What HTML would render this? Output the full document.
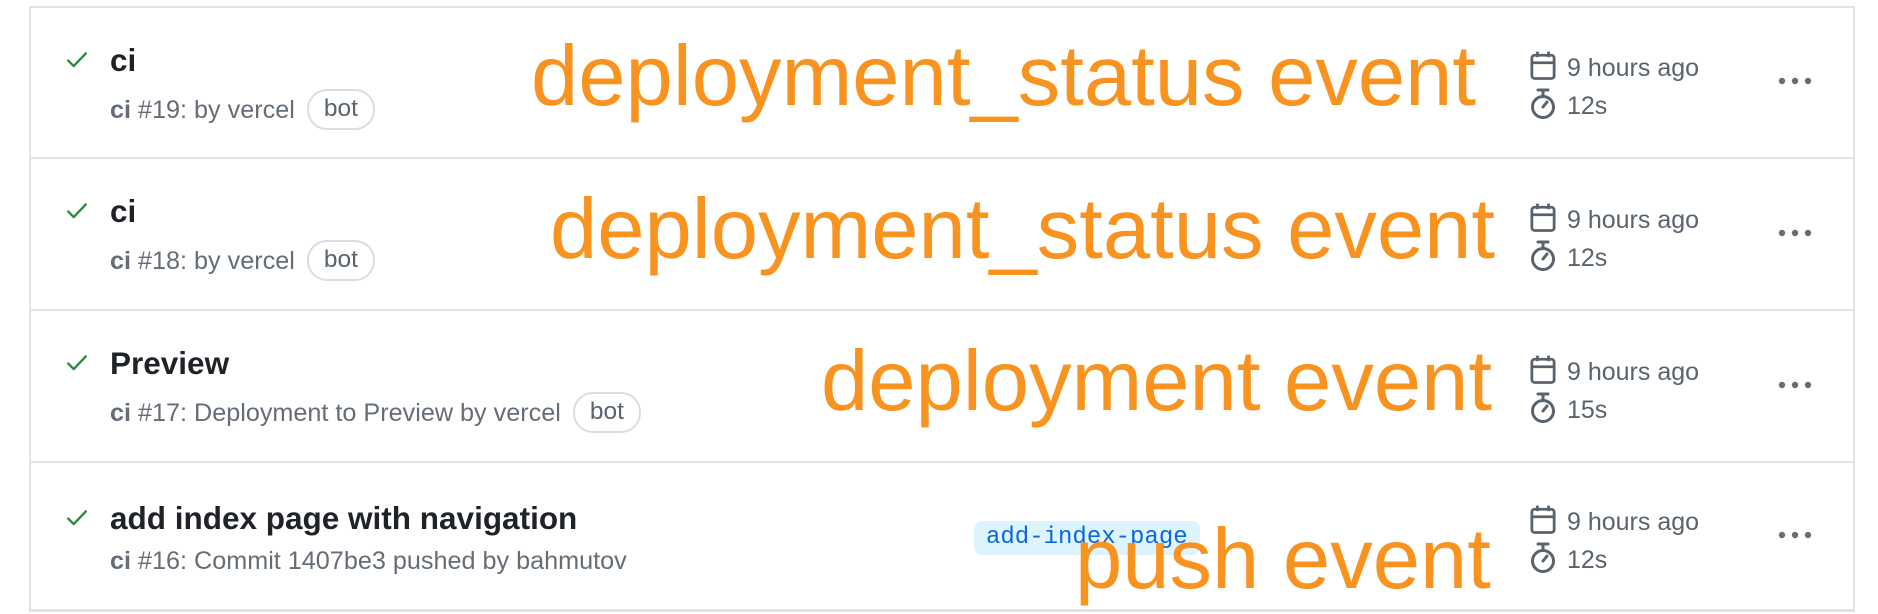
<!DOCTYPE html>
<html><head><meta charset="utf-8"><style>
body{margin:0;width:1878px;height:612px;background:#fff;overflow:hidden;position:relative;font-family:"Liberation Sans",sans-serif}
.box{position:absolute;left:29px;top:7px;width:1822px;height:602px;border-left:2px solid #e3e3e3;border-right:2px solid #e3e3e3}
.sep{position:absolute;left:29px;width:1826px;height:2px;background:#e3e3e3}
.row{position:absolute;left:0;width:1878px;height:152px}
.chk{position:absolute;left:65px;width:24px;height:22px}
.t{position:absolute;left:110px;font-size:31.5px;font-weight:bold;color:#1f2328;line-height:1}
.s{position:absolute;left:110px;font-size:25.2px;color:#656d76;line-height:1;white-space:nowrap}
.s b{color:#656d76}
.bot{display:inline-block;border:2px solid #d8dee4;border-radius:20px;padding:6px 15px;margin-left:5px;color:#59636e;font-size:24.5px;vertical-align:middle;position:relative;top:-2px}
.o{position:absolute;font-size:85px;color:#f7931e;line-height:1;white-space:nowrap}
.meta{position:absolute;left:1530px;font-size:25px;color:#59636e}
.meta div{position:absolute;left:37px;white-space:nowrap;line-height:1}
.dots{position:absolute;left:1778px;width:34px;height:8px}
.br{position:absolute;left:974px;top:59px;background:#ddf4ff;color:#0969da;font-family:"Liberation Mono",monospace;font-size:24px;border-radius:8px;padding:4px 12px;line-height:1.1}
</style></head><body>
<div class="box"></div>
<div class="sep" style="top:6px"></div>
<div class="sep" style="top:157px"></div>
<div class="sep" style="top:309px"></div>
<div class="sep" style="top:461px"></div>
<div class="sep" style="top:609px;height:3px"></div>

<div class="row" style="top:7px">
 <svg class="chk" style="top:42px" viewBox="0 0 20 20"><path d="M2 10.5l5 5L18 4" fill="none" stroke="#2c8a3e" stroke-width="2.2" stroke-linecap="round" stroke-linejoin="round"/></svg>
 <div class="t" style="top:38px">ci</div>
 <div class="s" style="top:84px"><b>ci</b> #19: by vercel <span class="bot">bot</span></div>
 <div class="o" style="left:531px;top:27px">deployment_status event</div>
</div>
<div class="row" style="top:158px">
 <svg class="chk" style="top:42px" viewBox="0 0 20 20"><path d="M2 10.5l5 5L18 4" fill="none" stroke="#2c8a3e" stroke-width="2.2" stroke-linecap="round" stroke-linejoin="round"/></svg>
 <div class="t" style="top:38px">ci</div>
 <div class="s" style="top:84px"><b>ci</b> #18: by vercel <span class="bot">bot</span></div>
 <div class="o" style="left:550px;top:29px">deployment_status event</div>
</div>
<div class="row" style="top:310px">
 <svg class="chk" style="top:42px" viewBox="0 0 20 20"><path d="M2 10.5l5 5L18 4" fill="none" stroke="#2c8a3e" stroke-width="2.2" stroke-linecap="round" stroke-linejoin="round"/></svg>
 <div class="t" style="top:38px">Preview</div>
 <div class="s" style="top:84px"><b>ci</b> #17: Deployment to Preview by vercel <span class="bot">bot</span></div>
 <div class="o" style="left:821px;top:29px">deployment event</div>
</div>
<div class="row" style="top:462px">
 <svg class="chk" style="top:45px" viewBox="0 0 20 20"><path d="M2 10.5l5 5L18 4" fill="none" stroke="#2c8a3e" stroke-width="2.2" stroke-linecap="round" stroke-linejoin="round"/></svg>
 <div class="t" style="top:41px">add index page with navigation</div>
 <div class="s" style="top:87px"><b>ci</b> #16: Commit 1407be3 pushed by bahmutov</div>
 <div class="br">add-index-page</div>
 <div class="o" style="left:1075px;top:55px">push event</div>
</div>

<div style="position:absolute;left:0;top:0">
 <div class="meta" style="top:50px"><svg width="26" height="31" viewBox="0 0 28 32"><rect x="2" y="5" width="24" height="25" rx="3" fill="none" stroke="#59636e" stroke-width="3"/><path d="M2 13h24M8 1v6M20 1v6" stroke="#59636e" stroke-width="3"/></svg><div style="top:6px">9 hours ago</div></div>
 <div class="meta" style="top:88px"><svg width="26" height="32" viewBox="0 0 26 32"><circle cx="13" cy="19" r="10.5" fill="none" stroke="#59636e" stroke-width="3"/><path d="M8 2h10M13 2v6M13 19l4-5" stroke="#59636e" stroke-width="3" stroke-linecap="round"/></svg><div style="top:6px">12s</div></div>
 <svg class="dots" style="top:77px" viewBox="0 0 34 8"><circle cx="4" cy="4" r="3.2" fill="#656d76"/><circle cx="17" cy="4" r="3.2" fill="#656d76"/><circle cx="30" cy="4" r="3.2" fill="#656d76"/></svg>

 <div class="meta" style="top:202px"><svg width="26" height="31" viewBox="0 0 28 32"><rect x="2" y="5" width="24" height="25" rx="3" fill="none" stroke="#59636e" stroke-width="3"/><path d="M2 13h24M8 1v6M20 1v6" stroke="#59636e" stroke-width="3"/></svg><div style="top:6px">9 hours ago</div></div>
 <div class="meta" style="top:240px"><svg width="26" height="32" viewBox="0 0 26 32"><circle cx="13" cy="19" r="10.5" fill="none" stroke="#59636e" stroke-width="3"/><path d="M8 2h10M13 2v6M13 19l4-5" stroke="#59636e" stroke-width="3" stroke-linecap="round"/></svg><div style="top:6px">12s</div></div>
 <svg class="dots" style="top:229px" viewBox="0 0 34 8"><circle cx="4" cy="4" r="3.2" fill="#656d76"/><circle cx="17" cy="4" r="3.2" fill="#656d76"/><circle cx="30" cy="4" r="3.2" fill="#656d76"/></svg>

 <div class="meta" style="top:354px"><svg width="26" height="31" viewBox="0 0 28 32"><rect x="2" y="5" width="24" height="25" rx="3" fill="none" stroke="#59636e" stroke-width="3"/><path d="M2 13h24M8 1v6M20 1v6" stroke="#59636e" stroke-width="3"/></svg><div style="top:6px">9 hours ago</div></div>
 <div class="meta" style="top:392px"><svg width="26" height="32" viewBox="0 0 26 32"><circle cx="13" cy="19" r="10.5" fill="none" stroke="#59636e" stroke-width="3"/><path d="M8 2h10M13 2v6M13 19l4-5" stroke="#59636e" stroke-width="3" stroke-linecap="round"/></svg><div style="top:6px">15s</div></div>
 <svg class="dots" style="top:381px" viewBox="0 0 34 8"><circle cx="4" cy="4" r="3.2" fill="#656d76"/><circle cx="17" cy="4" r="3.2" fill="#656d76"/><circle cx="30" cy="4" r="3.2" fill="#656d76"/></svg>

 <div class="meta" style="top:504px"><svg width="26" height="31" viewBox="0 0 28 32"><rect x="2" y="5" width="24" height="25" rx="3" fill="none" stroke="#59636e" stroke-width="3"/><path d="M2 13h24M8 1v6M20 1v6" stroke="#59636e" stroke-width="3"/></svg><div style="top:6px">9 hours ago</div></div>
 <div class="meta" style="top:542px"><svg width="26" height="32" viewBox="0 0 26 32"><circle cx="13" cy="19" r="10.5" fill="none" stroke="#59636e" stroke-width="3"/><path d="M8 2h10M13 2v6M13 19l4-5" stroke="#59636e" stroke-width="3" stroke-linecap="round"/></svg><div style="top:6px">12s</div></div>
 <svg class="dots" style="top:531px" viewBox="0 0 34 8"><circle cx="4" cy="4" r="3.2" fill="#656d76"/><circle cx="17" cy="4" r="3.2" fill="#656d76"/><circle cx="30" cy="4" r="3.2" fill="#656d76"/></svg>
</div>
</body></html>
